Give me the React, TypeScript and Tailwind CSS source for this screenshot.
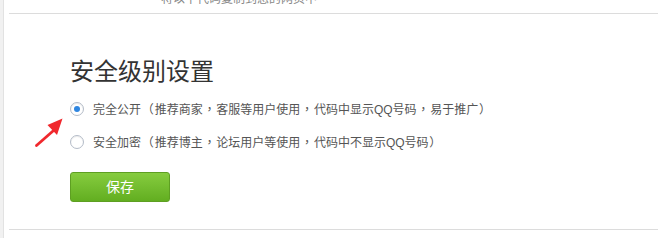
import React from 'react';

const font = { fontFamily: '"Liberation Sans", "Noto Sans CJK SC", sans-serif' };
const punctFont = { fontFamily: '"Noto Sans CJK TC", sans-serif' };

interface RadioRowProps {
  checked?: boolean;
  label: string;
}

// full-width punctuation sits centred in its cell, like the original page font
const renderLabel = (text: string) =>
  text.split(/([（），])/).map((part, i) =>
    /^[（），]$/.test(part) ? (
      <span key={i} className="px-[0.8px]" style={punctFont}>
        {part}
      </span>
    ) : (
      part
    )
  );

const RadioRow: React.FC<RadioRowProps> = ({ checked, label }) => (
  <label className="flex items-center h-[20px] cursor-pointer">
    <span className="w-[14px] h-[14px] rounded-full border border-[#b4bcc8] bg-white flex items-center justify-center shadow-[inset_0_1px_1px_rgba(0,0,0,0.08)]">
      {checked && <span className="w-[6px] h-[6px] rounded-full bg-[#2f86e0]" />}
    </span>
    <span className="ml-[9px] text-[12px] leading-[20px] text-[#555]">{renderLabel(label)}</span>
  </label>
);

const Arrow = () => (
  <svg className="absolute left-[34px] top-[116px]" width="32" height="32" viewBox="0 0 32 32">
    <path d="M2.5 29.5 L19 15" stroke="#f0282d" strokeWidth="2.8" strokeLinecap="round" />
    <path d="M28.5 2.5 L13.5 9 L23 19 Z" fill="#f0282d" />
  </svg>
);

export default function App() {
  return (
    <div className="w-[658px] h-[238px] bg-white flex relative overflow-hidden" style={font}>
      <div className="w-[4px] h-full bg-[#f1f1f1] border-r border-[#e2e2e2]" />
      <div className="flex-1 flex flex-col">
        <div className="h-[13px] overflow-hidden pl-[157px]">
          <div className="text-[12px] leading-[12px] mt-[-7px] text-[#888]">将以下代码复制到您的网页中</div>
        </div>
        <div className="ml-[5px] border-t border-[#dcdcdc]" />
        <div className="pl-[66px] pt-[46px] flex flex-col">
          <h2 className="text-[24px] leading-[24px] text-[#333] font-normal">安全级别设置</h2>
          <div className="mt-[15px] flex flex-col gap-[13px]">
            <RadioRow checked label="完全公开（推荐商家，客服等用户使用，代码中显示QQ号码，易于推广）" />
            <RadioRow label="安全加密（推荐博主，论坛用户等使用，代码中不显示QQ号码）" />
          </div>
          <button
            type="button"
            className="mt-[20px] w-[100px] h-[30px] rounded-[3px] border border-[#5e9f22] bg-gradient-to-b from-[#86cc3e] to-[#62ae20] text-white text-[14px] leading-[28px]"
          >
            保存
          </button>
        </div>
        <div className="flex-1" />
        <div className="ml-[5px] mb-[8px] border-t border-[#dcdcdc]" />
      </div>
      <Arrow />
    </div>
  );
}
